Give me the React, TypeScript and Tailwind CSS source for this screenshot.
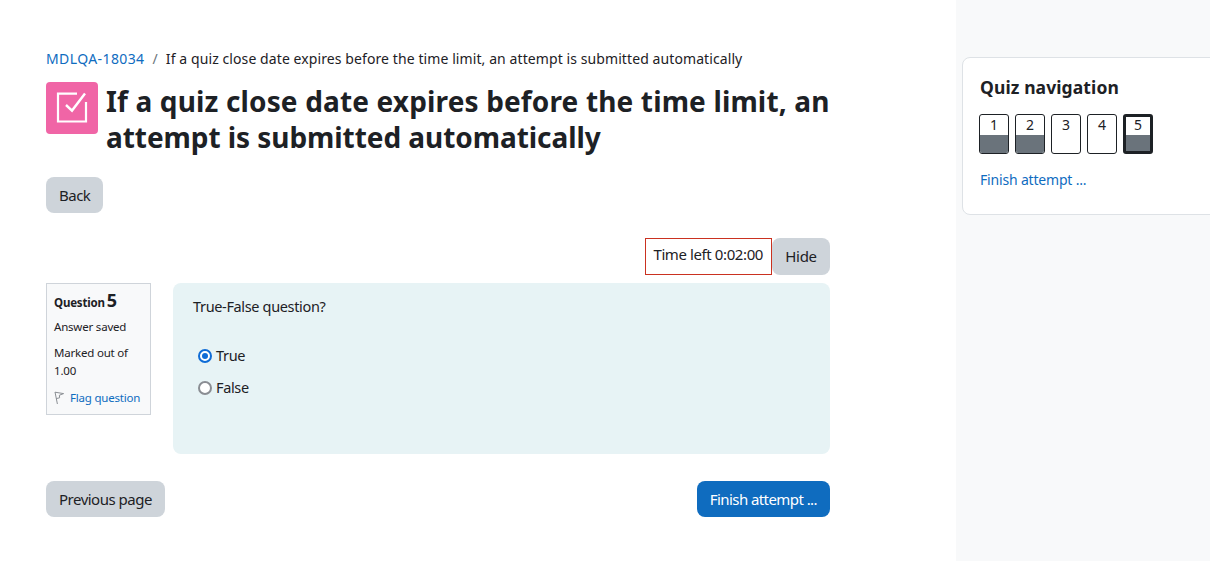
import React from 'react';

const FONT = "font-['Noto_Sans','Open_Sans',sans-serif]";

type NavItem = {
  label: string;
  answered: boolean;
  current?: boolean;
};

const navItems: NavItem[] = [
  { label: '1', answered: true },
  { label: '2', answered: true },
  { label: '3', answered: false },
  { label: '4', answered: false },
  { label: '5', answered: true, current: true }
];

const QuizIcon = () => (
  <svg width="32" height="32" viewBox="0 0 32 32" fill="none" stroke="#fff" strokeWidth="2.2">
    <path d="M30 10V29.5H2V1.6H21" />
    <path d="M10 13l6 5.6L29 1.6" strokeWidth="2.4" />
  </svg>
);

const FlagIcon = () => (
  <svg width="11" height="14" viewBox="0 0 11 14" fill="none" stroke="#8b8f94" strokeWidth="1">
    <path d="M1 1l2.4 12" />
    <path d="M1 1.2l8.6 1.4-4.2 1.6 0.2 2.6-3.4 0.8" />
  </svg>
);

const NavButton = ({ item }: { item: NavItem }) => (
  <div
    className={`flex h-10 w-[30px] flex-col overflow-hidden rounded-[3px] bg-white ${
      item.current ? 'border-[3px] border-[#1d2125]' : 'border border-[#1d2125]'
    }`}
  >
    <div className={`flex flex-1 justify-center text-[14px] leading-[20px] text-[#1d2125] ${item.current ? '-mt-[2px]' : ''}`}>
      {item.label}
    </div>
    {item.answered && <div className={`${item.current ? 'h-[17px]' : 'h-[19px]'} bg-[#6a737b]`} />}
  </div>
);

export default function App() {
  return (
    <div className={`flex h-[561px] w-full overflow-hidden bg-white text-[14px] text-[#1d2125] ${FONT}`}>
      <main className="w-[956px] shrink-0 pl-[46px] pr-[126px] pt-[49px]">
        <nav className="flex h-5 items-center text-[14px] leading-5 tracking-[0.09px]">
          <a className="tracking-[0.4px] text-[#0f6cbf]">MDLQA-18034</a>
          <span className="ml-[8px] text-[#6a737b]">/</span>
          <span className="ml-[8px]">If a quiz close date expires before the time limit, an attempt is submitted automatically</span>
        </nav>

        <div className="mt-[13px] flex gap-2">
          <div className="flex h-[52px] w-[52px] shrink-0 items-center justify-center rounded-[4px] bg-[#f065a6]">
            <QuizIcon />
          </div>
          <h1 className="pt-[1px] text-[28px] font-bold leading-[36px] tracking-[0.15px]">
            If a quiz close date expires before the time limit, an{' '}
            <span className="tracking-[-0.06px]">attempt is submitted automatically</span>
          </h1>
        </div>

        <button className="mt-[22px] block h-9 rounded-lg bg-[#ced4da] px-[13px] text-[15px] tracking-[-0.5px]">Back</button>

        <div className="mt-[25px] flex justify-end">
          <div className="flex h-[37px] items-center border border-[#ca3120] pb-[5px] pl-[7px] pr-[8px] text-[15px] tracking-[-0.4px]">Time left 0:02:00</div>
          <button className="h-[37px] w-[58px] rounded-lg bg-[#ced4da] text-[15px] tracking-[-0.3px]">Hide</button>
        </div>

        <section className="mt-2 flex items-start gap-[22px]">
          <div className="h-[132px] w-[105px] shrink-0 border border-[#cfd4da] bg-[#f8f9fa] px-[7px] pt-[7px] text-[11.5px] leading-[18px] tracking-[-0.2px]">
            <h3 className="flex h-5 items-baseline gap-[2px] font-bold leading-[20px]">
              Question <span className="text-[18px] font-bold leading-[18px]">5</span>
            </h3>
            <p className="mt-[7px]">Answer saved</p>
            <p className="mt-[8px]">Marked out of 1.00</p>
            <p className="mt-[9px] flex items-center gap-[5px] text-[#0f6cbf]">
              <FlagIcon />
              Flag question
            </p>
          </div>

          <div className="h-[171px] flex-1 rounded-lg bg-[#e7f3f5] px-5 pt-[12px] text-[14.5px] leading-[22px] tracking-[-0.35px]">
            <p>True-False question?</p>
            <label className="mt-[22px] flex h-8 items-center gap-[4px]">
              <span className="ml-[5px] mt-[1px] flex h-[14px] w-[14px] items-center justify-center rounded-full border-2 border-[#0f6cd6] bg-white">
                <span className="h-[6px] w-[6px] rounded-full bg-[#0f6cd6]" />
              </span>
              True
            </label>
            <label className="flex h-8 items-center gap-[4px]">
              <span className="ml-[5px] mt-[1px] h-[14px] w-[14px] rounded-full border-2 border-[#8a8d93] bg-white" />
              False
            </label>
          </div>
        </section>

        <div className="mt-[27px] flex justify-between">
          <button className="h-9 rounded-lg bg-[#ced4da] px-[13px] text-[15px] tracking-[-0.5px]">Previous page</button>
          <button className="h-9 rounded-lg bg-[#0f6cbf] px-[13px] text-[15px] tracking-[-0.57px] text-white">Finish attempt ...</button>
        </div>
      </main>

      <aside className="flex-1 bg-[#f8f9fa] pl-[6px] pt-[57px]">
        <div className="h-[158px] w-[300px] rounded-lg border border-[#dee2e6] bg-white px-[16px] pt-[17px]">
          <h2 className="pl-[1px] text-[17.5px] font-bold leading-[24px] tracking-[0.1px]">Quiz navigation</h2>
          <div className="mt-[15px] flex gap-[6px]">
            {navItems.map((item) => (
              <NavButton key={item.label} item={item} />
            ))}
          </div>
          <a className="mt-[16px] block pl-[1px] text-[14px] leading-5 tracking-[-0.18px] text-[#0f6cbf]">Finish attempt ...</a>
        </div>
      </aside>
    </div>
  );
}
